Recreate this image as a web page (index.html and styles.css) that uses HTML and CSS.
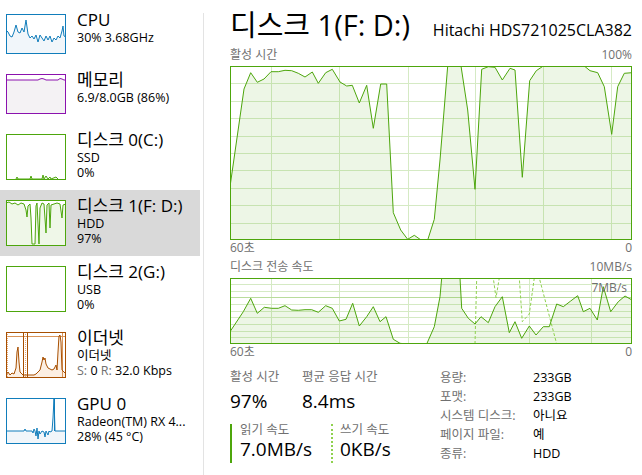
FILE: index.html
```html
<!DOCTYPE html>
<html>
<head>
<meta charset="utf-8">
<title>작업 관리자 - 디스크 1</title>
<link rel="stylesheet" href="styles.css">
</head>
<body>
<div class="app">

<div class="side">
  <div class="item">
    <svg class="thumb" width="60" height="40" viewBox="0 0 60 40">
      <polygon fill="#f1f6fa" points="0,16 2,18 4,22 6,23 8,18 10,11 12,18 14,19 16,14 18,18 20,6 22,20 24,24 26,22 28,25 30,21 32,28 34,21 36,24 38,27 40,22 42,26 44,22 46,28 48,24 50,26 52,22 54,24 56,17 57,12 58,22 60,23 60,40 0,40"/>
      <polyline fill="none" stroke="#117dbb" points="0,16 2,18 4,22 6,23 8,18 10,11 12,18 14,19 16,14 18,18 20,6 22,20 24,24 26,22 28,25 30,21 32,28 34,21 36,24 38,27 40,22 42,26 44,22 46,28 48,24 50,26 52,22 54,24 56,17 57,12 58,22 60,23"/>
      <rect x="0.5" y="0.5" width="59" height="39" fill="none" stroke="#117dbb"/>
    </svg>
    <div class="txt">
      <div class="name">CPU</div>
      <div class="sub">30% 3.68GHz</div>
    </div>
  </div>

  <div class="item">
    <svg class="thumb" width="60" height="40" viewBox="0 0 60 40">
      <polygon fill="#f4f2f4" points="0,6 32,6 34,5 36,4.5 38,5 40,6 52,6 54,4.5 56,5 58,6 60,6 60,40 0,40"/>
      <polyline fill="none" stroke="#8b12ae" points="0,6 32,6 34,5 36,4.5 38,5 40,6 52,6 54,4.5 56,5 58,6 60,6"/>
      <rect x="0.5" y="0.5" width="59" height="39" fill="none" stroke="#8b12ae"/>
    </svg>
    <div class="txt">
      <div class="name">메모리</div>
      <div class="sub">6.9/8.0GB (86%)</div>
    </div>
  </div>

  <div class="item">
    <svg class="thumb" width="60" height="46" viewBox="0 0 60 46">
      <polygon fill="#eff7e8" points="0,45 10,45 11,43 12,45 24,45 25,42 26,45 36,45 37,41 38,45 40,42 42,45 44,43 45,45 50,43 52,45 60,45"/>
      <polyline fill="none" stroke="#4da60c" points="10,45 11,43 12,45 24,45 25,42 26,45 36,45 37,41 38,45 40,42 42,45 44,43 45,45 50,43 52,45"/>
      <rect x="0.5" y="0.5" width="59" height="45" fill="none" stroke="#4da60c"/>
    </svg>
    <div class="txt">
      <div class="name">디스크 0(C:)</div>
      <div class="sub">SSD</div>
      <div class="sub">0%</div>
    </div>
  </div>

  <div class="item sel">
    <svg class="thumb" width="60" height="46" viewBox="0 0 60 46">
      <rect x="0" y="0" width="60" height="46" fill="#fff"/>
      <polygon fill="#eff7e8" points="0,3 3,2 6,4 9,3 12,5 15,3 18,4 20,10 21,17 22,6 24,4 25,18 26,44 29,44 30,6 31,3 33,44 34,8 36,3 38,4 40,33 41,5 43,3 44,28 45,5 48,4 51,3 54,4 56,18 57,5 60,4 60,46 0,46"/>
      <polyline fill="none" stroke="#4da60c" points="0,3 3,2 6,4 9,3 12,5 15,3 18,4 20,10 21,17 22,6 24,4 25,18 26,44 29,44 30,6 31,3 33,44 34,8 36,3 38,4 40,33 41,5 43,3 44,28 45,5 48,4 51,3 54,4 56,18 57,5 60,4"/>
      <rect x="0.5" y="0.5" width="59" height="45" fill="none" stroke="#4da60c"/>
    </svg>
    <div class="txt">
      <div class="name">디스크 1(F: D:)</div>
      <div class="sub">HDD</div>
      <div class="sub">97%</div>
    </div>
  </div>

  <div class="item">
    <svg class="thumb" width="60" height="46" viewBox="0 0 60 46">
      <rect x="0.5" y="0.5" width="59" height="45" fill="none" stroke="#4da60c"/>
    </svg>
    <div class="txt">
      <div class="name">디스크 2(G:)</div>
      <div class="sub">USB</div>
      <div class="sub">0%</div>
    </div>
  </div>

  <div class="item">
    <svg class="thumb" width="60" height="46" viewBox="0 0 60 46">
      <polygon fill="#fcefe3" points="0,43 2,40 4,43 6,41 8,42 10,36 11,20 12,15 13,30 14,40 16,42 17,43 24,43 28,43 30,42 32,40 34,38 36,30 37,25 38,28 39,26 40,32 42,36 44,37 46,38 48,37 50,33 51,38 52,20 53,4 54,3 55,10 56,38 58,40 60,42 60,46 0,46"/>
      <line x1="0" y1="4.5" x2="60" y2="4.5" stroke="#d9955a"/>
      <line x1="1.5" y1="0" x2="1.5" y2="46" stroke="#e8a877" stroke-dasharray="1 1"/>
      <line x1="17.5" y1="0" x2="17.5" y2="46" stroke="#a74f01"/>
      <line x1="19.5" y1="0" x2="19.5" y2="46" stroke="#e8a877" stroke-dasharray="1 1"/>
      <line x1="21.5" y1="0" x2="21.5" y2="46" stroke="#a74f01"/>
      <line x1="56.5" y1="0" x2="56.5" y2="46" stroke="#d9955a"/>
      <polyline fill="none" stroke="#a74f01" points="0,43 2,40 4,43 6,41 8,42 10,36 11,20 12,15 13,30 14,40 16,42 17,43 24,43 28,43 30,42 32,40 34,38 36,30 37,25 38,28 39,26 40,32 42,36 44,37 46,38 48,37 50,33 51,38 52,20 53,4 54,3 55,10 56,38 58,40 60,42"/>
      <rect x="0.5" y="0.5" width="59" height="45" fill="none" stroke="#a74f01"/>
    </svg>
    <div class="txt">
      <div class="name">이더넷</div>
      <div class="sub">이더넷</div>
      <div class="sub"><span class="gray">S:</span> 0 <span class="gray">R:</span> 32.0 Kbps</div>
    </div>
  </div>

  <div class="item">
    <svg class="thumb" width="60" height="46" viewBox="0 0 60 46">
      <polygon fill="#f1f6fa" points="0,33 18,33 19,31 20,33 26,33 27,35 28,31 29,33 30,38 31,30 32,41 33,33 34,36 36,33 38,34 39,39 40,33 42,37 43,33 44,34 46,33 47,20 48,1 49,33 60,33 60,46 0,46"/>
      <polyline fill="none" stroke="#117dbb" points="0,33 18,33 19,31 20,33 26,33 27,35 28,31 29,33 30,38 31,30 32,41 33,33 34,36 36,33 38,34 39,39 40,33 42,37 43,33 44,34 46,33 47,20 48,1 49,33 60,33"/>
      <line x1="48.5" y1="0" x2="48.5" y2="33" stroke="#117dbb"/>
      <rect x="0.5" y="0.5" width="59" height="45" fill="none" stroke="#117dbb"/>
    </svg>
    <div class="txt">
      <div class="name">GPU 0</div>
      <div class="sub">Radeon(TM) RX 4...</div>
      <div class="sub">28% (45 °C)</div>
    </div>
  </div>
</div>

<div class="divider"></div>

<div class="main">
  <div class="head">
    <span class="title">디스크 1(F: D:)</span>
    <span class="model">Hitachi HDS721025CLA382</span>
  </div>

  <div class="axis cap"><span>활성 시간</span><span>100%</span></div>
  <svg class="graph" width="402" height="174" viewBox="0 0 402 174">
    <g stroke="#d5eac4">
      <line x1="0" y1="17.5" x2="402" y2="17.5"/>
      <line x1="0" y1="35.5" x2="402" y2="35.5"/>
      <line x1="0" y1="52.5" x2="402" y2="52.5"/>
      <line x1="0" y1="70.5" x2="402" y2="70.5"/>
      <line x1="0" y1="87.5" x2="402" y2="87.5"/>
      <line x1="0" y1="104.5" x2="402" y2="104.5"/>
      <line x1="0" y1="122.5" x2="402" y2="122.5"/>
      <line x1="0" y1="139.5" x2="402" y2="139.5"/>
      <line x1="0" y1="157.5" x2="402" y2="157.5"/>
      <line x1="41.5" y1="0" x2="41.5" y2="174"/>
      <line x1="109.5" y1="0" x2="109.5" y2="174"/>
      <line x1="178.5" y1="0" x2="178.5" y2="174"/>
      <line x1="245.5" y1="0" x2="245.5" y2="174"/>
      <line x1="313.5" y1="0" x2="313.5" y2="174"/>
      <line x1="381.5" y1="0" x2="381.5" y2="174"/>
    </g>
    <polygon fill="#4da60c" fill-opacity="0.1" points="0,120.7 14,23 20.7,6.7 27.3,16.3 34,13 41,5.7 48.3,5.7 55,4.3 61.7,4.7 68.3,7.3 75,11 82.3,6 88.3,17.3 95.7,6.7 102.3,3.3 110,16 116.7,20 122.3,19.3 129.3,37 136.7,19.3 143.3,62.3 150.7,18 156.7,18 163.3,146.7 170.7,164 177.7,173.3 184.3,169.3 191,174 197.7,174 204.3,153.3 210,94 217.7,0 231,0 237.7,44 245,123.3 251.7,3.3 258.3,0.7 265,1.3 272.3,14 280,2.3 285,4 292.3,111.3 299.7,14.7 306.3,4.7 313.3,0 354.3,0 360,4.7 367.7,6.7 374.3,20.7 381.7,68.3 387.7,20.7 394.3,7.3 402,6.7 402,174 0,174"/>
    <polyline fill="none" stroke="#4da60c" points="0,120.7 14,23 20.7,6.7 27.3,16.3 34,13 41,5.7 48.3,5.7 55,4.3 61.7,4.7 68.3,7.3 75,11 82.3,6 88.3,17.3 95.7,6.7 102.3,3.3 110,16 116.7,20 122.3,19.3 129.3,37 136.7,19.3 143.3,62.3 150.7,18 156.7,18 163.3,146.7 170.7,164 177.7,173.3 184.3,169.3 191,174 197.7,174 204.3,153.3 210,94 217.7,0 231,0 237.7,44 245,123.3 251.7,3.3 258.3,0.7 265,1.3 272.3,14 280,2.3 285,4 292.3,111.3 299.7,14.7 306.3,4.7 313.3,0 354.3,0 360,4.7 367.7,6.7 374.3,20.7 381.7,68.3 387.7,20.7 394.3,7.3 402,6.7"/>
    <rect x="0.5" y="0.5" width="401" height="173" fill="none" stroke="#4da60c"/>
  </svg>
  <div class="axis"><span>60초</span><span>0</span></div>

  <div class="axis cap gap"><span>디스크 전송 속도</span><span>10MB/s</span></div>
  <div class="rate">
    <svg class="graph" width="402" height="66" viewBox="0 0 402 66">
      <g stroke="#d5eac4">
        <line x1="0" y1="6.5" x2="402" y2="6.5"/>
        <line x1="0" y1="13.5" x2="402" y2="13.5"/>
        <line x1="0" y1="26.5" x2="402" y2="26.5"/>
        <line x1="0" y1="33.5" x2="402" y2="33.5"/>
        <line x1="0" y1="39.5" x2="402" y2="39.5"/>
        <line x1="0" y1="46.5" x2="402" y2="46.5"/>
        <line x1="0" y1="53.5" x2="402" y2="53.5"/>
        <line x1="0" y1="59.5" x2="402" y2="59.5"/>
        <line x1="41.5" y1="0" x2="41.5" y2="66"/>
        <line x1="109.5" y1="0" x2="109.5" y2="66"/>
        <line x1="178.5" y1="0" x2="178.5" y2="66"/>
        <line x1="299.5" y1="0" x2="299.5" y2="66"/>
        <line x1="361.5" y1="0" x2="361.5" y2="66"/>
      </g>
      <line x1="0" y1="19.5" x2="402" y2="19.5" stroke="#b9dc9c"/>
      <polygon fill="#4da60c" fill-opacity="0.1" points="0,53.7 13.3,33.7 20.7,20.3 27.3,35.3 34.3,29.3 41.7,30.3 48.3,30.3 55,27.7 61.7,32 68.3,32.3 75,31.7 81.7,31.7 88.3,34.3 95.7,27.7 102.3,30.3 109.3,43 116,41.3 122.7,25.3 129.3,48 136.7,38.7 143.3,28.7 150,43.7 156,38.7 163.3,61.3 170,65.3 176.7,66 196.7,66 204.3,48.7 210,18.7 211.7,0 230,0 231.7,30.3 238.3,40.3 245,46 251,38.7 258.3,44.7 265,28.7 272.3,18.7 279.3,54.7 285,43.7 291.7,60.3 299.3,48 306,57 313.3,48.7 319.3,48.7 326.7,26 333.3,28.7 340.7,23 347.7,17.7 353.3,33.7 360,30.3 367.3,42 373.3,8.7 380.7,33.7 388.3,23.7 395,18 402,22 402,66 0,66"/>
      <polyline fill="none" stroke="#8fd14f" stroke-dasharray="3 2" points="0,66 245,66 246.7,0 263.3,0 266,19.7 269.3,0 289.3,0 292.3,43.7 299.3,36 304.3,0 309.3,0 326.7,66 402,66"/>
      <polyline fill="none" stroke="#4da60c" points="0,53.7 13.3,33.7 20.7,20.3 27.3,35.3 34.3,29.3 41.7,30.3 48.3,30.3 55,27.7 61.7,32 68.3,32.3 75,31.7 81.7,31.7 88.3,34.3 95.7,27.7 102.3,30.3 109.3,43 116,41.3 122.7,25.3 129.3,48 136.7,38.7 143.3,28.7 150,43.7 156,38.7 163.3,61.3 170,65.3 176.7,66 196.7,66 204.3,48.7 210,18.7 211.7,0 230,0 231.7,30.3 238.3,40.3 245,46 251,38.7 258.3,44.7 265,28.7 272.3,18.7 279.3,54.7 285,43.7 291.7,60.3 299.3,48 306,57 313.3,48.7 319.3,48.7 326.7,26 333.3,28.7 340.7,23 347.7,17.7 353.3,33.7 360,30.3 367.3,42 373.3,8.7 380.7,33.7 388.3,23.7 395,18 402,22"/>
      <rect x="0.5" y="0.5" width="401" height="65" fill="none" stroke="#4da60c"/>
    </svg>
    <span class="mark">7MB/s</span>
  </div>
  <div class="axis"><span>60초</span><span>0</span></div>

  <div class="stats">
    <div class="left">
      <div class="pair">
        <div class="stat first">
          <div class="lbl">활성 시간</div>
          <div class="big">97%</div>
        </div>
        <div class="stat">
          <div class="lbl">평균 응답 시간</div>
          <div class="big">8.4ms</div>
        </div>
      </div>
      <div class="pair">
        <div class="speed read">
          <div class="lbl">읽기 속도</div>
          <div class="big">7.0MB/s</div>
        </div>
        <div class="speed write">
          <div class="lbl">쓰기 속도</div>
          <div class="big">0KB/s</div>
        </div>
      </div>
    </div>
    <table class="info" cellspacing="0" cellpadding="0">
      <tr><td class="k">용량:</td><td>233GB</td></tr>
      <tr><td class="k">포맷:</td><td>233GB</td></tr>
      <tr><td class="k">시스템 디스크:</td><td>아니요</td></tr>
      <tr><td class="k">페이지 파일:</td><td>예</td></tr>
      <tr><td class="k">종류:</td><td>HDD</td></tr>
    </table>
  </div>
</div>

</div>
</body>
</html>
```

FILE: styles.css
```css
body { margin:0; padding:0; background:#ffffff; color:#000000; font-family:"Segoe UI","Open Sans","Noto Sans CJK KR",sans-serif; font-size:12px; }
.app { display:flex; width:642px; height:475px; overflow:hidden; }

/* left list */
.side { width:200px; flex:none; padding-top:4px; }
.item { display:flex; padding:10px 0 10px 6px; }
.item.sel { background:#d9d9d9; }
.thumb { display:block; flex:none; }
.txt { margin-left:11px; margin-top:-4px; white-space:nowrap; }
.name { font-size:17px; line-height:20px; }
.sub { font-size:12.5px; line-height:15px; }
.gray { color:#707070; }

.divider { width:1px; flex:none; background:#e3e3e3; margin:13px 0 0 3px; }

/* right panel */
.main { flex:1; padding:0 10px 0 26px; }
.head { display:flex; justify-content:space-between; align-items:baseline; height:46px; white-space:nowrap; }
.title { font-size:29px; line-height:50px; }
.model { font-size:16px; }
.axis { display:flex; justify-content:space-between; color:#707070; font-size:12px; line-height:16px; }
.axis.cap { line-height:18px; margin-bottom:2px; }
.axis.gap { margin-top:2px; }
.graph { display:block; }
.rate { position:relative; }
.mark { position:absolute; right:5px; top:2px; color:#707070; font-size:12px; line-height:15px; }

/* numbers */
.stats { display:flex; }
.left { width:210px; }
.pair { display:flex; }
.stat { margin-top:8px; }
.stat.first { width:72px; }
.lbl { color:#707070; font-size:12.5px; line-height:18px; }
.big { font-size:19px; line-height:30px; }
.speed { margin-top:8px; height:39px; }
.speed .lbl { line-height:12px; }
.speed .big { line-height:27px; }
.read { width:91px; border-left:2px solid #4da60c; padding-left:8px; }
.write { border-left:2px dotted #8fd14f; padding-left:7px; }
.info { margin-top:9px; font-size:12.5px; }
.info td { line-height:18px; padding:0; }
.info td.k { width:93px; color:#707070; }
```
